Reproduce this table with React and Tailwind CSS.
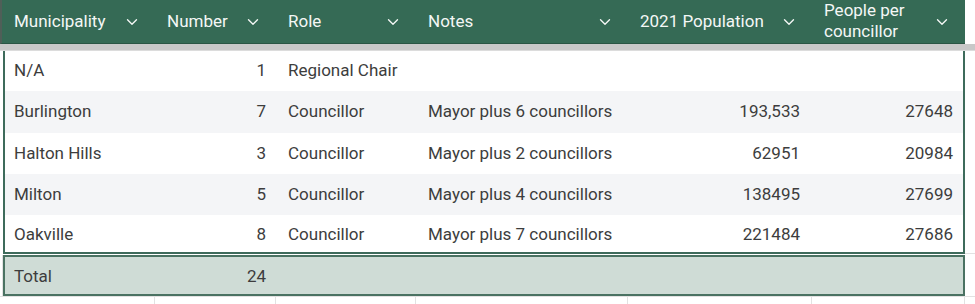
import React from "react";

const cols = [
  { w: "w-[155px]", label: "Municipality" },
  { w: "w-[121px]", label: "Number" },
  { w: "w-[140px]", label: "Role" },
  { w: "w-[212px]", label: "Notes" },
  { w: "w-[184px]", label: "2021 Population" },
  { w: "w-[153px]", label: "People per councillor" },
];

const rows = [
  ["N/A", "1", "Regional Chair", "", "", ""],
  ["Burlington", "7", "Councillor", "Mayor plus 6 councillors", "193,533", "27648"],
  ["Halton Hills", "3", "Councillor", "Mayor plus 2 councillors", "62951", "20984"],
  ["Milton", "5", "Councillor", "Mayor plus 4 councillors", "138495", "27699"],
  ["Oakville", "8", "Councillor", "Mayor plus 7 councillors", "221484", "27686"],
];

const heights = ["h-[40px]", "h-[42px]", "h-[41px]", "h-[41px]", "h-[37px] pt-[3px]"];

function Chevron() {
  return (
    <svg width="18" height="18" viewBox="0 0 24 24" fill="none" stroke="#f4f7f5" strokeWidth="1.8" strokeLinecap="round" strokeLinejoin="round" className="shrink-0">
      <path d="M6 9l6 6 6-6" />
    </svg>
  );
}

export default function App() {
  return (
    <div className="w-[975px] h-[304px] bg-white overflow-hidden font-['Roboto',sans-serif] text-[17px] text-[#3d3d3d]">
      {/* header */}
      <div className="flex h-[44px] w-[965px] bg-[#356a55] border-l-2 border-b border-l-[#4f5f58] border-b-[#2a5544] text-[#f4f7f5]">
        {cols.map((c, i) => (
          <div key={i} className={`${i === 0 ? "w-[153px]" : c.w} flex items-center justify-between pl-3 pr-[14px]`}>
            {i === 5 ? (
              <span className="leading-[21px] -mt-[2px]">People per<br />councillor</span>
            ) : (
              <span className="leading-none">{c.label}</span>
            )}
            <Chevron />
          </div>
        ))}
      </div>
      {/* gray strip */}
      <div className="h-[7px] w-full bg-[#c8c8c8] border-b border-[#dcdcdc]"></div>
      {/* body */}
      <div className="flex">
        <div className="w-[3px]"></div>
        <div className="w-[962px] border-l-2 border-r-2 border-b-2 border-[#3e6b5b]">
          {rows.map((r, ri) => (
            <div key={ri} className={`flex ${heights[ri]} items-center ${ri % 2 === 1 ? "bg-[#f4f5f7]" : "bg-white"}`}>
              <div className="w-[150px] pl-[9px]">{r[0]}</div>
              <div className="w-[121px] text-right pr-[10px]">{r[1]}</div>
              <div className="w-[140px] pl-3">{r[2]}</div>
              <div className="w-[212px] pl-3">{r[3]}</div>
              <div className="w-[184px] text-right pr-[12px]">{r[4]}</div>
              <div className="w-[151px] text-right pr-[10px]">{r[5]}</div>
            </div>
          ))}
        </div>
        <div className="flex-1 border-b border-[#e2e2e2]"></div>
      </div>
      {/* total */}
      <div className="flex mt-[1px]">
        <div className="w-[3px] border-r border-[#e2e2e2]"></div>
        <div className="w-[962px] h-[41px] flex items-center pt-[2px] bg-[#cfdcd6] border-2 border-[#4a7262]">
          <div className="w-[150px] pl-[9px]">Total</div>
          <div className="w-[121px] text-right pr-[10px]">24</div>
        </div>
        <div className="flex-1"></div>
      </div>
      {/* gridlines below */}
      <div className="flex h-[20px] border-t border-[#e2e2e2]">
        <div className="w-[155px] border-r border-[#e2e2e2]"></div>
        <div className="w-[121px] border-r border-[#e2e2e2]"></div>
        <div className="w-[140px] border-r border-[#e2e2e2]"></div>
        <div className="w-[212px] border-r border-[#e2e2e2]"></div>
        <div className="w-[184px] border-r border-[#e2e2e2]"></div>
        <div className="w-[153px] border-r border-[#e2e2e2]"></div>
      </div>
    </div>
  );
}
